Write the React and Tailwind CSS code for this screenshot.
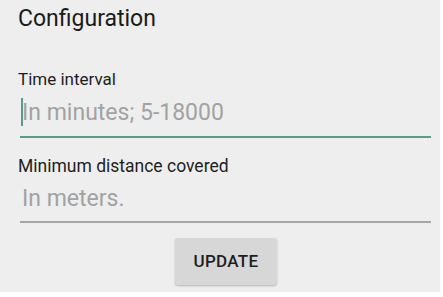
import React from 'react';

const App = () => {
  return (
    <div className="w-[443px] h-[297px] bg-white overflow-hidden" style={{ fontFamily: 'Roboto, "Liberation Sans", sans-serif' }}>
      <div className="w-[440px] h-[292px] bg-[#eeeeee] pl-[18px] pr-[9px] pt-[4px]">
        <h1 className="text-[23px] leading-[30px] text-[#1a1a1a]">Configuration</h1>

        <label className="block mt-[34px] text-[17px] leading-[22px] text-[#1e1e1e]">Time interval</label>
        <div className="relative ml-[2px] h-[48px] border-b-2 border-[#5a9b8c] flex items-center">
          <span className="absolute left-[1px] top-[8px] w-[2px] h-[28px] bg-[#5a9b8c]" />
          <span className="pl-[2px] text-[23px] text-[#a2a2a2]">In minutes; 5-18000</span>
        </div>

        <label className="block mt-[17px] text-[17.5px] leading-[22px] text-[#1e1e1e]">Minimum distance covered</label>
        <div className="ml-[2px] h-[46px] border-b-2 border-[#a6a6a6] flex items-center">
          <span className="pl-[2px] text-[23px] text-[#a2a2a2]">In meters.</span>
        </div>

        <div className="flex justify-center mt-[15px] pl-[3px]">
          <button className="w-[102px] h-[47px] rounded-[3px] bg-[#d7d7d7] shadow-[0_1px_2px_rgba(0,0,0,0.25)] text-[17px] font-medium tracking-[0.3px] text-[#1e1e1e]">
            UPDATE
          </button>
        </div>
      </div>
    </div>
  );
};

export default App;
